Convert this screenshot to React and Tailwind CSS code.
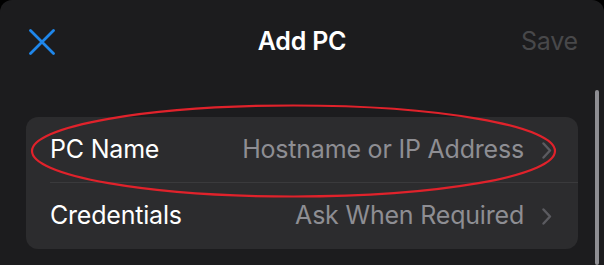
import React from "react";

function Chevron() {
  return (
    <svg width="10" height="17" viewBox="0 0 10 17" className="shrink-0">
      <path d="M1.5 1.5 L8 8.5 L1.5 15.5" fill="none" stroke="#5b5b60" strokeWidth="2.4" strokeLinecap="round" strokeLinejoin="round" />
    </svg>
  );
}

function Row({ label, value, divider }) {
  return (
    <div className="relative flex h-[66px] items-center pl-[24px] pr-[26px]">
      <span className="text-[25px] text-white tracking-[-0.2px]">{label}</span>
      <span className="ml-auto text-[25px] text-[#8e8e93] tracking-[-0.2px]">{value}</span>
      <span className="ml-[18px] flex items-center"><Chevron /></span>
      {divider && <div className="absolute bottom-0 left-[24px] right-0 h-px bg-[#3a3a3c]" />}
    </div>
  );
}

export default function App() {
  return (
    <div className="w-[604px] h-[265px] bg-black overflow-hidden" style={{ fontFamily: "Inter, 'Noto Sans', sans-serif" }}>
      <div className="relative w-full h-full bg-[#1c1c1e] rounded-t-[12px]">
        <div className="relative flex h-[84px] items-center px-[29px]">
          <svg width="26" height="26" viewBox="0 0 26 26">
            <path d="M1.5 1.5 L24.5 24.5 M24.5 1.5 L1.5 24.5" stroke="#1f87eb" strokeWidth="2.8" strokeLinecap="round" />
          </svg>
          <div className="absolute inset-0 flex items-center justify-center">
            <span className="text-[25px] font-semibold text-white tracking-[-0.2px]">Add PC</span>
          </div>
          <span className="ml-auto mr-[-3px] text-[25px] text-[#48484a] tracking-[-0.2px]">Save</span>
        </div>
        <div className="mx-[26px] mt-[33px] rounded-[12px] bg-[#2c2c2e]">
          <Row label="PC Name" value="Hostname or IP Address" divider />
          <Row label="Credentials" value="Ask When Required" />
        </div>
        <div className="absolute right-[5px] top-[90px] bottom-0 w-[4px] rounded-full bg-[#8e8e93]" />
        <svg className="absolute left-0 top-0 pointer-events-none" width="604" height="265">
          <ellipse cx="293.5" cy="151" rx="261.5" ry="45.5" fill="none" stroke="#e0222b" strokeWidth="2.2" />
        </svg>
      </div>
    </div>
  );
}
